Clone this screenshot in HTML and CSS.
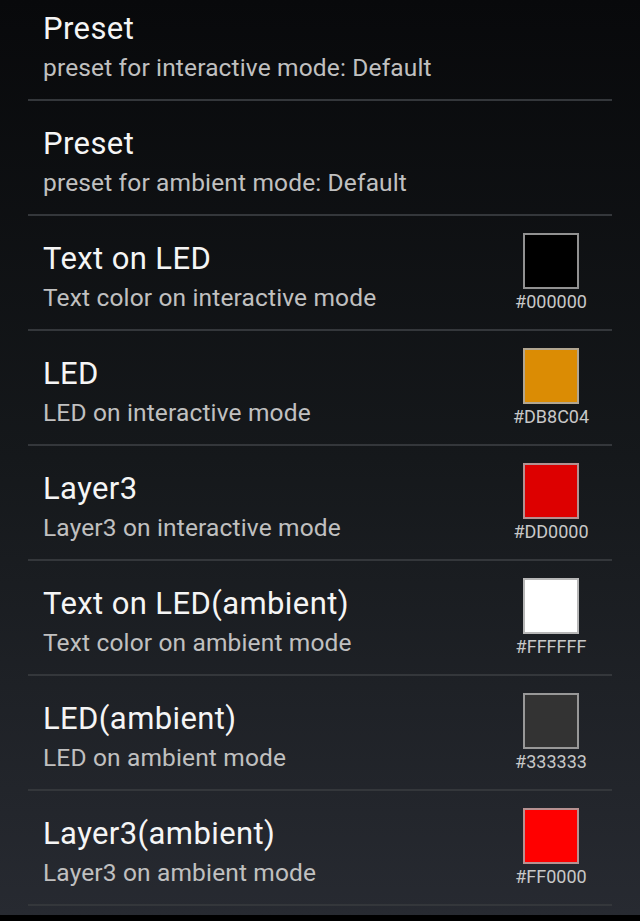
FILE: index.html
```html
<!DOCTYPE html>
<html>
<head>
<meta charset="utf-8">
<link rel="stylesheet" href="styles.css">
</head>
<body>
<div class="screen">
  <ul class="list">
    <li class="row">
      <div class="text"><div class="title">Preset</div><div class="sub">preset for interactive mode: Default</div></div>
    </li>
    <li class="row">
      <div class="text"><div class="title">Preset</div><div class="sub">preset for ambient mode: Default</div></div>
    </li>
    <li class="row">
      <div class="text"><div class="title">Text on LED</div><div class="sub">Text color on interactive mode</div></div>
      <div class="pick"><div class="swatch" style="background:#000000"></div><div class="hex">#000000</div></div>
    </li>
    <li class="row">
      <div class="text"><div class="title">LED</div><div class="sub">LED on interactive mode</div></div>
      <div class="pick"><div class="swatch" style="background:#DB8C04"></div><div class="hex">#DB8C04</div></div>
    </li>
    <li class="row">
      <div class="text"><div class="title">Layer3</div><div class="sub">Layer3 on interactive mode</div></div>
      <div class="pick"><div class="swatch" style="background:#DD0000"></div><div class="hex">#DD0000</div></div>
    </li>
    <li class="row">
      <div class="text"><div class="title">Text on LED(ambient)</div><div class="sub">Text color on ambient mode</div></div>
      <div class="pick"><div class="swatch" style="background:#FFFFFF"></div><div class="hex">#FFFFFF</div></div>
    </li>
    <li class="row">
      <div class="text"><div class="title">LED(ambient)</div><div class="sub">LED on ambient mode</div></div>
      <div class="pick"><div class="swatch" style="background:#333333"></div><div class="hex">#333333</div></div>
    </li>
    <li class="row">
      <div class="text"><div class="title">Layer3(ambient)</div><div class="sub">Layer3 on ambient mode</div></div>
      <div class="pick"><div class="swatch" style="background:#FF0000"></div><div class="hex">#FF0000</div></div>
    </li>
  </ul>
</div>
</body>
</html>
```
FILE: styles.css
```css
html, body {
  margin: 0;
  padding: 0;
  background: #000;
  height: 100%;
  overflow: hidden;
}
.screen {
  height: 915px;
  overflow: hidden;
  background: linear-gradient(to bottom, #08090b 0%, #15181b 50%, #272a31 100%);
  font-family: Roboto, "Noto Sans", sans-serif;
}
.list {
  list-style: none;
  margin: -14px 28px 0;
  padding: 0;
}
.row {
  display: flex;
  align-items: flex-start;
  padding: 0 21px 0 15px;
  border-bottom: 2px solid #34373b;
}
.text {
  flex: 1;
  padding: 25px 0 16px;
}
.title {
  font-size: 31px;
  line-height: 36px;
  letter-spacing: 0.4px;
  color: #f5f5f5;
}
.sub {
  margin-top: 6px;
  font-size: 24.5px;
  line-height: 30px;
  letter-spacing: 0.15px;
  color: #c0c0c0;
}
.pick {
  width: 80px;
  padding-top: 17px;
  display: flex;
  flex-direction: column;
  align-items: center;
}
.swatch {
  width: 52px;
  height: 52px;
  border: 2px solid rgba(170, 170, 170, 0.85);
}
.hex {
  margin-top: 3px;
  font-size: 18px;
  line-height: 20px;
  color: #c8c8c8;
}
```
